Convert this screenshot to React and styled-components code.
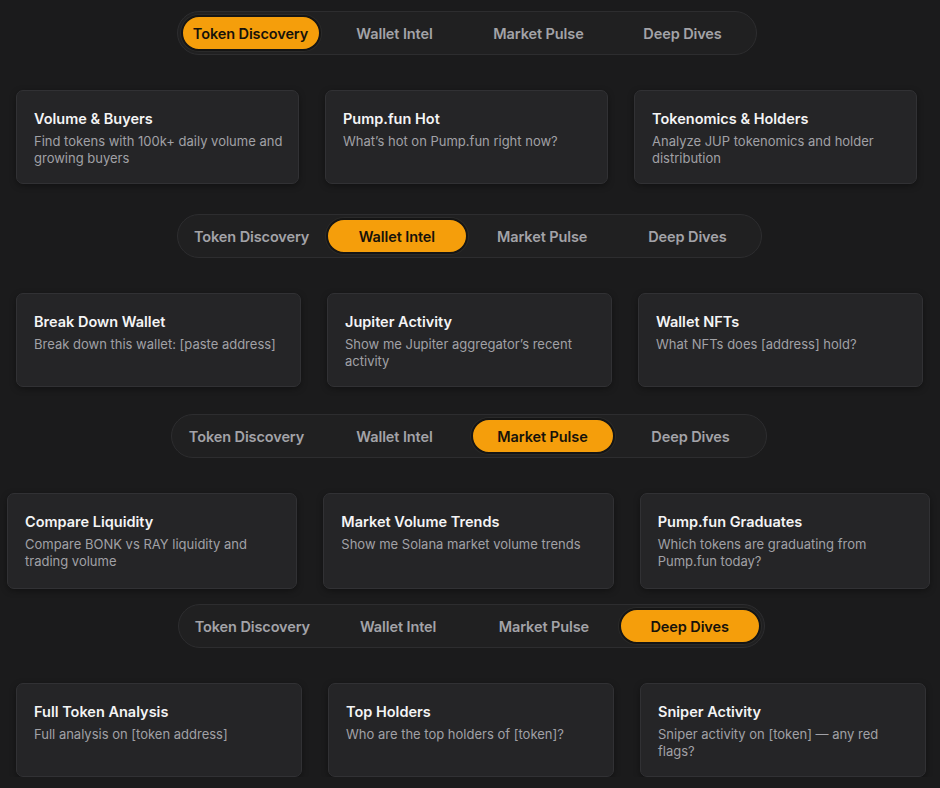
import React from 'react';
import styled, { createGlobalStyle } from 'styled-components';

const GlobalStyle = createGlobalStyle`
  html, body {
    margin: 0;
    padding: 0;
    background: #1b1b1c;
  }
  body {
    font-family: Inter, "Liberation Sans", sans-serif;
    -webkit-font-smoothing: antialiased;
  }
`;

const TABS = ['Token Discovery', 'Wallet Intel', 'Market Pulse', 'Deep Dives'];

const SECTIONS = [
  {
    active: 0,
    top: 11,
    left: 16,
    width: 901,
    barWidth: 580,
    cardHeight: 94,
    cards: [
      { title: 'Volume & Buyers', text: 'Find tokens with 100k+ daily volume and growing buyers' },
      { title: 'Pump.fun Hot', text: 'What’s hot on Pump.fun right now?' },
      { title: 'Tokenomics & Holders', text: 'Analyze JUP tokenomics and holder distribution' },
    ],
  },
  {
    active: 1,
    top: 30,
    left: 16,
    width: 907,
    barWidth: 585,
    cardHeight: 94,
    cards: [
      { title: 'Break Down Wallet', text: 'Break down this wallet: [paste address]' },
      { title: 'Jupiter Activity', text: 'Show me Jupiter aggregator’s recent activity' },
      { title: 'Wallet NFTs', text: 'What NFTs does [address] hold?' },
    ],
  },
  {
    active: 2,
    top: 27,
    left: 7,
    width: 923,
    barWidth: 596,
    cardHeight: 96,
    cards: [
      { title: 'Compare Liquidity', text: 'Compare BONK vs RAY liquidity and trading volume' },
      { title: 'Market Volume Trends', text: 'Show me Solana market volume trends' },
      { title: 'Pump.fun Graduates', text: 'Which tokens are graduating from Pump.fun today?' },
    ],
  },
  {
    active: 3,
    top: 15,
    left: 16,
    width: 910,
    barWidth: 587,
    cardHeight: 94,
    cards: [
      { title: 'Full Token Analysis', text: 'Full analysis on [token address]' },
      { title: 'Top Holders', text: 'Who are the top holders of [token]?' },
      { title: 'Sniper Activity', text: 'Sniper activity on [token] — any red flags?' },
    ],
  },
];

const Page = styled.div`
  display: flex;
  flex-direction: column;
`;

const Section = styled.section`
  display: flex;
  flex-direction: column;
  align-items: center;
  gap: 35px;
  width: ${({ $width }) => $width}px;
  margin-top: ${({ $top }) => $top}px;
  margin-left: ${({ $left }) => $left}px;
`;

const TabBar = styled.div`
  box-sizing: border-box;
  width: ${({ $width }) => $width}px;
  height: 44px;
  padding: 3px;
  display: grid;
  grid-template-columns: repeat(4, 1fr);
  gap: 4px;
  background: #202021;
  border: 1px solid #2d2d2f;
  border-radius: 22px;
`;

const Tab = styled.button`
  box-sizing: border-box;
  height: 36px;
  margin: 0;
  padding: 0;
  border-radius: 18px;
  border: 2px solid ${({ $active }) => ($active ? '#151515' : 'transparent')};
  background: ${({ $active }) => ($active ? '#f59e0b' : 'transparent')};
  box-shadow: ${({ $active }) => ($active ? '0 0 0 1px #2a2a2a' : 'none')};
  color: ${({ $active }) => ($active ? '#17120a' : '#a3a3a8')};
  font-family: Inter, "Liberation Sans", sans-serif;
  font-size: 14.5px;
  font-weight: 600;
  letter-spacing: -0.1px;
  cursor: pointer;
`;

const CardRow = styled.div`
  width: 100%;
  display: grid;
  grid-template-columns: repeat(3, 1fr);
  gap: 26px;
`;

const Card = styled.div`
  box-sizing: border-box;
  height: ${({ $height }) => $height}px;
  padding: 19px 12px 0 17px;
  background: #252527;
  border: 1px solid #313134;
  border-radius: 7px;
  box-shadow: 0 2px 6px rgba(0, 0, 0, 0.35);
`;

const CardTitle = styled.div`
  color: #f4f4f5;
  font-size: 14.5px;
  font-weight: 600;
  line-height: 18px;
  margin-bottom: 5px;
`;

const CardText = styled.div`
  color: #a1a1a6;
  font-size: 13px;
  line-height: 17px;
`;

export default function App() {
  return (
    <Page>
      <GlobalStyle />
      {SECTIONS.map((s, i) => (
        <Section key={i} $top={s.top} $left={s.left} $width={s.width}>
          <TabBar $width={s.barWidth}>
            {TABS.map((t, j) => (
              <Tab key={t} $active={j === s.active}>
                {t}
              </Tab>
            ))}
          </TabBar>
          <CardRow>
            {s.cards.map((c) => (
              <Card key={c.title} $height={s.cardHeight}>
                <CardTitle>{c.title}</CardTitle>
                <CardText>{c.text}</CardText>
              </Card>
            ))}
          </CardRow>
        </Section>
      ))}
    </Page>
  );
}
